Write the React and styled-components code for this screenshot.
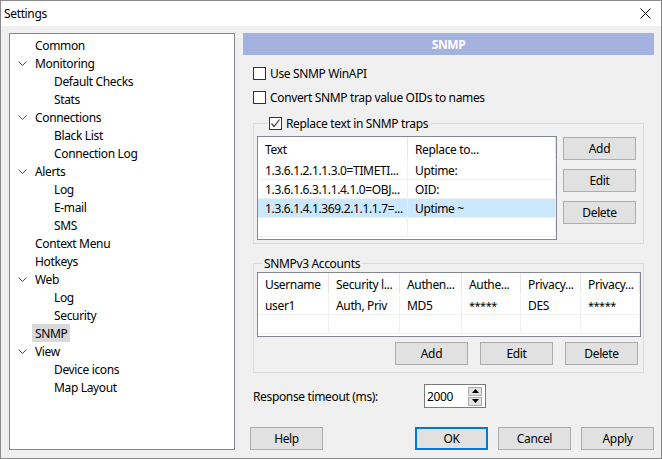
import React from "react";
import styled, { createGlobalStyle, css } from "styled-components";

const Global = createGlobalStyle`
  html, body { margin: 0; padding: 0; background: #fff; }
  * { box-sizing: border-box; }
  body { font-family: "Noto Sans", "Segoe UI", sans-serif; font-size: 12px; letter-spacing: -0.35px; color: #000; }
`;

const Window = styled.div`
  width: 662px;
  height: 459px;
  border: 1px solid #8a8a8a;
  background: #f0f0f0;
  display: flex;
  flex-direction: column;
`;

const TitleBar = styled.div`
  height: 25px;
  background: #fff;
  display: flex;
  align-items: center;
  justify-content: space-between;
  padding: 0 10px 0 3px;
`;

const Title = styled.span`
  font-size: 12px;
`;

const Body = styled.div`
  flex: 1;
  display: flex;
  gap: 8px;
  padding: 7px 7px 8px 8px;
`;

const Tree = styled.div`
  width: 226px;
  background: #fff;
  border: 1px solid #828790;
  padding: 2px 0 0 0;
  display: flex;
  flex-direction: column;
`;

const TreeRow = styled.div`
  height: 18px;
  display: flex;
  align-items: center;
  padding-left: ${(p) => (p.$level === 1 ? 41 : 22)}px;
  position: relative;
`;

const Chevron = styled.svg`
  position: absolute;
  left: 8px;
  top: 7px;
`;

const TreeLabel = styled.span`
  padding: 1px 3px 0;
  height: 18px;
  line-height: 17px;
  background: ${(p) => (p.$selected ? "#d9d9d9" : "transparent")};
`;

const Right = styled.div`
  width: 411px;
  display: flex;
  flex-direction: column;
`;

const Header = styled.div`
  height: 22px;
  background: #a4b2e0;
  color: #fff;
  font-weight: bold;
  display: flex;
  align-items: center;
  justify-content: center;
`;

const Content = styled.div`
  padding: 0 10px;
  display: flex;
  flex-direction: column;
`;

const CheckRow = styled.label`
  display: flex;
  align-items: center;
  gap: 4px;
  height: 16px;
  margin-top: ${(p) => p.$mt || 0}px;
`;

const Box = styled.span`
  width: 13px;
  height: 13px;
  border: 1px solid #333;
  background: #fff;
  display: inline-flex;
  align-items: center;
  justify-content: center;
  flex: none;
`;

const Group = styled.div`
  border: 1px solid #dcdcdc;
  margin-top: ${(p) => p.$mt}px;
  padding: ${(p) => p.$pad};
  display: flex;
  flex-direction: column;
`;

const GroupTitle = styled.div`
  margin-top: -8px;
  margin-left: ${(p) => p.$ml}px;
  height: 15px;
  padding: 0 1px;
  background: #f0f0f0;
  align-self: flex-start;
  display: flex;
  align-items: center;
  gap: 4px;
`;

const GroupBody = styled.div`
  display: flex;
  gap: ${(p) => p.$gap || 0}px;
  margin-top: ${(p) => p.$mt}px;
  flex-direction: ${(p) => p.$dir || "row"};
`;

const Table = styled.div`
  width: ${(p) => p.$w}px;
  height: ${(p) => p.$h}px;
  border: 1px solid #828790;
  background: #fff;
  display: grid;
  grid-template-columns: ${(p) => p.$cols};
  grid-auto-rows: ${(p) => p.$row}px;
  grid-template-rows: ${(p) => p.$head}px;
  align-content: start;
  overflow: hidden;
`;

const HeadCell = styled.div`
  padding: 2px 0 0 7px;
  display: flex;
  align-items: center;
  white-space: nowrap;
  overflow: hidden;
  border-right: 1px solid #e5e5e5;
  margin-bottom: 2px;
`;

const Cell = styled.div`
  padding: 1px 0 0 7px;
  display: flex;
  align-items: center;
  white-space: nowrap;
  overflow: hidden;
  border-right: 1px solid #f0f0f0;
  border-bottom: 1px solid #f0f0f0;
  background: ${(p) => (p.$sel ? "#cce8ff" : "#fff")};
  ${(p) =>
    p.$stars &&
    css`
      align-items: flex-start;
      padding-top: 2px;
      font-size: 11px;
      letter-spacing: -0.5px;
    `}
`;

const ButtonCol = styled.div`
  display: flex;
  flex-direction: column;
  gap: 9px;
  padding-top: 1px;
`;

const Btn = styled.button`
  width: 73px;
  height: 23px;
  background: #e1e1e1;
  border: ${(p) => (p.$default ? "2px solid #0078d7" : "1px solid #adadad")};
  font: inherit;
  letter-spacing: inherit;
  color: #000;
  padding: 0;
  display: flex;
  align-items: center;
  justify-content: center;
`;

const ButtonRow = styled.div`
  display: flex;
  gap: ${(p) => p.$gap}px;
  justify-content: ${(p) => p.$justify || "flex-end"};
  padding: ${(p) => p.$pad || "0"};
  margin-top: ${(p) => p.$mt || 0}px;
`;

const TimeoutRow = styled.div`
  display: flex;
  align-items: center;
  margin-top: 11px;
  height: 24px;
`;

const TimeoutLabel = styled.span`
  width: 171px;
`;

const Spin = styled.div`
  width: 62px;
  height: 24px;
  border: 1px solid #7a7a7a;
  background: #fff;
  display: flex;
  align-items: center;
  justify-content: space-between;
  padding: 0 3px 0 2px;
`;

const SpinBtns = styled.div`
  display: flex;
  flex-direction: column;
  gap: 1px;
`;

const SpinBtn = styled.div`
  width: 14px;
  height: 9px;
  background: #e1e1e1;
  border: 1px solid #adadad;
  display: flex;
  align-items: center;
  justify-content: center;
`;

const Footer = styled.div`
  margin-top: auto;
  display: flex;
  padding-left: 7px;
  gap: 10px;
`;

const Spacer = styled.div`
  flex: 1;
`;

const Check = ({ checked }) => (
  <Box>
    {checked && (
      <svg width="11" height="11" viewBox="0 0 11 11">
        <polyline points="1.5,5.5 4,8.5 9.5,1.5" fill="none" stroke="#333" strokeWidth="1.2" />
      </svg>
    )}
  </Box>
);

const tree = [
  { t: "Common", l: 0 },
  { t: "Monitoring", l: 0, e: true },
  { t: "Default Checks", l: 1 },
  { t: "Stats", l: 1 },
  { t: "Connections", l: 0, e: true },
  { t: "Black List", l: 1 },
  { t: "Connection Log", l: 1 },
  { t: "Alerts", l: 0, e: true },
  { t: "Log", l: 1 },
  { t: "E-mail", l: 1 },
  { t: "SMS", l: 1 },
  { t: "Context Menu", l: 0 },
  { t: "Hotkeys", l: 0 },
  { t: "Web", l: 0, e: true },
  { t: "Log", l: 1 },
  { t: "Security", l: 1 },
  { t: "SNMP", l: 0, s: true },
  { t: "View", l: 0, e: true },
  { t: "Device icons", l: 1 },
  { t: "Map Layout", l: 1 },
];

const replRows = [
  ["1.3.6.1.2.1.1.3.0=TIMETI...", "Uptime:"],
  ["1.3.6.1.6.3.1.1.4.1.0=OBJ...", "OID:"],
  ["1.3.6.1.4.1.369.2.1.1.1.7=...", "Uptime ~", true],
  ["", ""],
];

const accHead = ["Username", "Security l...", "Authen...", "Authe...", "Privacy...", "Privacy..."];
const accRows = [
  ["user1", "Auth, Priv", "MD5", "*****", "DES", "*****"],
  ["", "", "", "", "", ""],
];

export default function App() {
  return (
    <>
      <Global />
      <Window>
        <TitleBar>
          <Title>Settings</Title>
          <svg width="11" height="11" viewBox="0 0 11 11">
            <path d="M0.5 0.5 L10.5 10.5 M10.5 0.5 L0.5 10.5" stroke="#000" strokeWidth="1" />
          </svg>
        </TitleBar>
        <Body>
          <Tree>
            {tree.map((n, i) => (
              <TreeRow key={i} $level={n.l}>
                {n.e && (
                  <Chevron width="9" height="5" viewBox="0 0 9 5">
                    <polyline points="0.5,0.5 4.5,4.5 8.5,0.5" fill="none" stroke="#555" strokeWidth="1" />
                  </Chevron>
                )}
                <TreeLabel $selected={n.s}>{n.t}</TreeLabel>
              </TreeRow>
            ))}
          </Tree>
          <Right>
            <Header>SNMP</Header>
            <Content>
              <CheckRow $mt={10}>
                <Check />
                <span>Use SNMP WinAPI</span>
              </CheckRow>
              <CheckRow $mt={8}>
                <Check />
                <span>Convert SNMP trap value OIDs to names</span>
              </CheckRow>
              <Group $mt={18} $pad="0 6px 3px 3px">
                <GroupTitle $ml={11}>
                  <Check checked />
                  <span>Replace text in SNMP traps</span>
                </GroupTitle>
                <GroupBody $mt={5} $gap={6}>
                  <Table $w={300} $h={104} $cols="150px 148px" $head={24} $row={19}>
                    <HeadCell>Text</HeadCell>
                    <HeadCell>Replace to...</HeadCell>
                    {replRows.map((r, i) => (
                      <React.Fragment key={i}>
                        <Cell $sel={r[2]}>{r[0]}</Cell>
                        <Cell $sel={r[2]}>{r[1]}</Cell>
                      </React.Fragment>
                    ))}
                  </Table>
                  <ButtonCol>
                    <Btn>Add</Btn>
                    <Btn>Edit</Btn>
                    <Btn>Delete</Btn>
                  </ButtonCol>
                </GroupBody>
              </Group>
              <Group $mt={19} $pad="0 2px 7px 3px">
                <GroupTitle $ml={6}>
                  <span>SNMPv3 Accounts</span>
                </GroupTitle>
                <GroupBody $mt={1} $dir="column">
                  <Table $w={384} $h={65} $cols="71px 71px 62px 59px 60px 59px" $head={23} $row={19}>
                    {accHead.map((h, i) => (
                      <HeadCell key={i}>{h}</HeadCell>
                    ))}
                    {accRows.map((r, i) =>
                      r.map((c, j) => (
                        <Cell key={i + "-" + j} $stars={c === "*****"}>
                          {c}
                        </Cell>
                      ))
                    )}
                  </Table>
                  <ButtonRow $gap={12} $pad="0 3px 0 0" $mt={5}>
                    <Btn>Add</Btn>
                    <Btn>Edit</Btn>
                    <Btn>Delete</Btn>
                  </ButtonRow>
                </GroupBody>
              </Group>
              <TimeoutRow>
                <TimeoutLabel>Response timeout (ms):</TimeoutLabel>
                <Spin>
                  <span>2000</span>
                  <SpinBtns>
                    <SpinBtn>
                      <svg width="7" height="4" viewBox="0 0 7 4">
                        <polygon points="0,4 3.5,0 7,4" fill="#000" />
                      </svg>
                    </SpinBtn>
                    <SpinBtn>
                      <svg width="7" height="4" viewBox="0 0 7 4">
                        <polygon points="0,0 3.5,4 7,0" fill="#000" />
                      </svg>
                    </SpinBtn>
                  </SpinBtns>
                </Spin>
              </TimeoutRow>
            </Content>
            <Footer>
              <Btn>Help</Btn>
              <Spacer />
              <Btn $default>OK</Btn>
              <Btn>Cancel</Btn>
              <Btn>Apply</Btn>
            </Footer>
          </Right>
        </Body>
      </Window>
    </>
  );
}
